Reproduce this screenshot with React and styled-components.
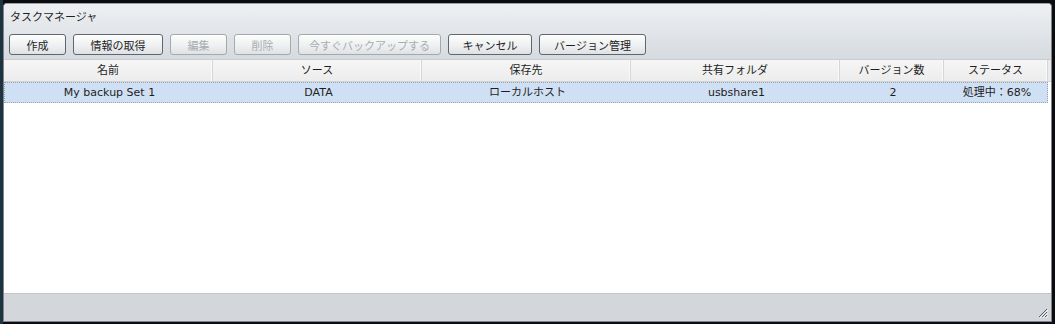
import React from 'react';
import styled, { createGlobalStyle } from 'styled-components';

const GlobalStyle = createGlobalStyle`
    html, body {
        margin : 0;
        padding : 0;
        width : 1055px;
        height : 324px;
        overflow : hidden;
        background : linear-gradient(90deg, #1d3340 0px, #1d3340 3px, #0b0c0d 3px);
        font-family : "DejaVu Sans", "Noto Sans CJK JP", sans-serif;
    }
`;

const columns = [
    { key: 'name', title: '名前' },
    { key: 'source', title: 'ソース' },
    { key: 'dest', title: '保存先' },
    { key: 'share', title: '共有フォルダ' },
    { key: 'versions', title: 'バージョン数' },
    { key: 'status', title: 'ステータス' },
];

const rows = [
    { name: 'My backup Set 1', source: 'DATA', dest: 'ローカルホスト', share: 'usbshare1', versions: '2', status: '処理中：68%' },
];

const buttons = [
    { label: '作成', width: 57 },
    { label: '情報の取得', width: 90 },
    { label: '編集', width: 57, disabled: true },
    { label: '削除', width: 57, disabled: true },
    { label: '今すぐバックアップする', width: 143, disabled: true },
    { label: 'キャンセル', width: 84 },
    { label: 'バージョン管理', width: 107 },
];

const App = () => {
    return (
        <>
            <GlobalStyle />
            <Window>
                <TopArea>
                    <Title>タスクマネージャ</Title>
                    <Toolbar>
                        {buttons.map((b) => (
                            <ToolButton key={b.label} $w={b.width} disabled={b.disabled}>
                                {b.label}
                            </ToolButton>
                        ))}
                    </Toolbar>
                </TopArea>
                <GridHeader>
                    {columns.map((c) => (
                        <HeaderCell key={c.key}>{c.title}</HeaderCell>
                    ))}
                    <HeaderFiller />
                </GridHeader>
                <GridBody>
                    {rows.map((r, i) => (
                        <Row key={i} $selected>
                            {columns.map((c) => (
                                <Cell key={c.key}>{r[c.key]}</Cell>
                            ))}
                        </Row>
                    ))}
                </GridBody>
                <Footer>
                    <Grip width="10" height="10" viewBox="0 0 10 10">
                        <path d="M9 1 L1 9 M9 4 L4 9 M9 7 L7 9" stroke="#555b62" strokeWidth="1" />
                        <path d="M10 2 L2 10 M10 5 L5 10 M10 8 L8 10" stroke="#f4f6f8" strokeWidth="1" />
                    </Grip>
                </Footer>
            </Window>
        </>
    );
};

const Window = styled.div`
    margin : 3px 0 0 3px;
    width : 1047px;
    height : 317px;
    border : 1px solid #7d848b;
    border-top-color : #9aa1a8;
    border-radius : 4px 4px 0 0;
    display : flex;
    flex-direction : column;
    background : #ffffff;
    overflow : hidden;
`;

const TopArea = styled.div`
    height : 55px;
    background : linear-gradient(180deg, #eef0f2 0%, #dfe3e7 60%, #d6dbe0 100%);
    display : flex;
    flex-direction : column;
`;

const Title = styled.div`
    height : 28px;
    line-height : 27px;
    padding-left : 6px;
    font-size : 11px;
    color : #1e1e1e;
`;

const Toolbar = styled.div`
    display : flex;
    flex-direction : row;
    gap : 7px;
    padding-left : 5px;
    padding-top : 2px;
`;

const ToolButton = styled.button`
    width : ${(p) => p.$w}px;
    height : 21px;
    padding : 0;
    border : 1px solid ${(p) => (p.disabled ? '#a4a9ae' : '#5f666d')};
    border-radius : 3px;
    background : linear-gradient(180deg, #fdfdfd 0%, #eef0f1 55%, #dfe2e5 100%);
    font-family : "DejaVu Sans", "Noto Sans CJK JP", sans-serif;
    font-size : 11px;
    color : ${(p) => (p.disabled ? '#a9adb1' : '#1e1e1e')};
    box-shadow : inset 0 1px 0 #ffffff;
`;

const GridHeader = styled.div`
    height : 21px;
    display : grid;
    grid-template-columns : 209px 209px 209px 209px 104px 104px 1fr;
    background : linear-gradient(180deg, #f6f6f6 0%, #ececec 100%);
    border-top : 1px solid #c9cdd1;
    border-bottom : 1px solid #d2d2d2;
`;

const HeaderCell = styled.div`
    font-size : 11px;
    line-height : 21px;
    text-align : center;
    color : #1e1e1e;
    border-right : 1px solid #d6d6d6;
    box-shadow : inset -1px 0 0 #fafafa;
`;

const HeaderFiller = styled.div`
    background : #e9ebed;
`;

const GridBody = styled.div`
    flex : 1;
    background : #ffffff;
    padding-right : 3px;
`;

const Row = styled.div`
    height : 19px;
    display : grid;
    grid-template-columns : 209px 209px 209px 209px 104px 104px;
    background : ${(p) => (p.$selected ? '#cfe0f4' : '#ffffff')};
    border : 1px dotted #9aa3ad;
`;

const Cell = styled.div`
    font-size : 11px;
    line-height : 19px;
    text-align : center;
    color : #1e1e1e;
    white-space : nowrap;
`;

const Footer = styled.div`
    height : 24px;
    background : #d3d7db;
    border-top : 1px solid #c3c7cb;
    display : flex;
    justify-content : flex-end;
    align-items : flex-end;
    padding : 0 3px 3px 0;
`;

const Grip = styled.svg`
    display : block;
`;

export default App;
